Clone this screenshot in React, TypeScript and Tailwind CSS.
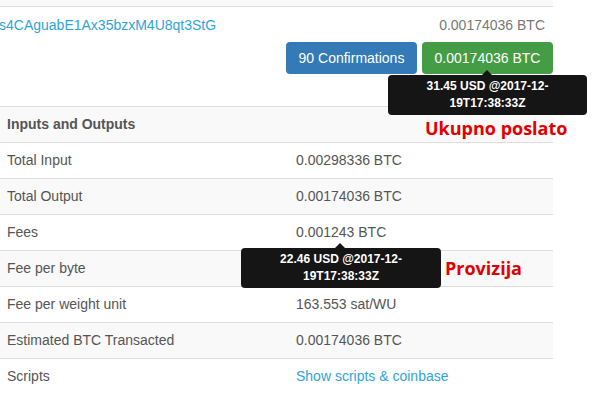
const rows = [
  { label: "Total Input", value: "0.00298336 BTC" },
  { label: "Total Output", value: "0.00174036 BTC" },
  { label: "Fees", value: "0.001243 BTC" },
  { label: "Fee per byte", value: "" },
  { label: "Fee per weight unit", value: "163.553 sat/WU" },
  { label: "Estimated BTC Transacted", value: "0.00174036 BTC" },
  { label: "Scripts", value: "Show scripts & coinbase", link: true },
];

export default function App() {
  return (
    <div className="relative w-[594px] h-[410px] bg-white overflow-hidden font-['Liberation_Sans',Arial,sans-serif] text-[14px] text-[#555]">
      <div className="w-[553px]">
        <div className="h-[7px] bg-[#f9f9f9] border-b border-[#ddd]" />
        <div className="pt-[8px] pb-[32px]">
          <div className="flex justify-between leading-5 pr-[8px]">
            <span className="text-[#2fa4d8] -ml-[1px]">s4CAguabE1Ax35bzxM4U8qt3StG</span>
            <span className="text-[#777]">0.00174036 BTC</span>
          </div>
          <div className="flex justify-end gap-[5px] mt-[7px]">
            <div className="w-[131px] h-[32px] rounded bg-[#337ab7] text-white flex items-center justify-center">
              90 Confirmations
            </div>
            <div className="w-[131px] h-[32px] rounded bg-[#449d44] text-white flex items-center justify-center">
              0.00174036 BTC
            </div>
          </div>
        </div>
        <div className="h-[36px] border-t border-[#ddd] bg-[#f9f9f9] flex items-center pl-[7px] font-bold">
          Inputs and Outputs
        </div>
        {rows.map((r, i) => (
          <div
            key={r.label}
            className={`h-[36px] border-t border-[#ddd] flex items-center ${i % 2 === 1 ? "bg-[#f9f9f9]" : "bg-white"}`}
          >
            <div className="w-[296px] pl-[7px]">{r.label}</div>
            <div className={r.link ? "text-[#2fa4d8]" : ""}>{r.value}</div>
          </div>
        ))}
      </div>

      {/* tooltip over the green button */}
      <div className="absolute left-[388px] top-[75px] w-[199px] h-[40px] rounded bg-[#151515] text-white text-[12px] font-bold leading-[17px] flex flex-col items-center justify-center">
        <div className="absolute -top-[5px] left-[94px] w-0 h-0 border-x-[5px] border-x-transparent border-b-[5px] border-b-[#151515]" />
        <span>31.45 USD @2017-12-</span>
        <span>19T17:38:33Z</span>
      </div>

      {/* tooltip under the fee */}
      <div className="absolute left-[241px] top-[248px] w-[200px] h-[40px] rounded bg-[#151515] text-white text-[12px] font-bold leading-[17px] flex flex-col items-center justify-center">
        <div className="absolute -top-[5px] left-[94px] w-0 h-0 border-x-[5px] border-x-transparent border-b-[5px] border-b-[#151515]" />
        <span>22.46 USD @2017-12-</span>
        <span>19T17:38:33Z</span>
      </div>

      <div className="absolute left-[425px] top-[116px] text-[18px] leading-6 font-bold text-[#e00000] font-['Open_Sans',sans-serif]">
        Ukupno poslato
      </div>
      <div className="absolute left-[445px] top-[256px] text-[18px] leading-6 font-bold text-[#e00000] font-['Open_Sans',sans-serif]">
        Provizija
      </div>
    </div>
  );
}
